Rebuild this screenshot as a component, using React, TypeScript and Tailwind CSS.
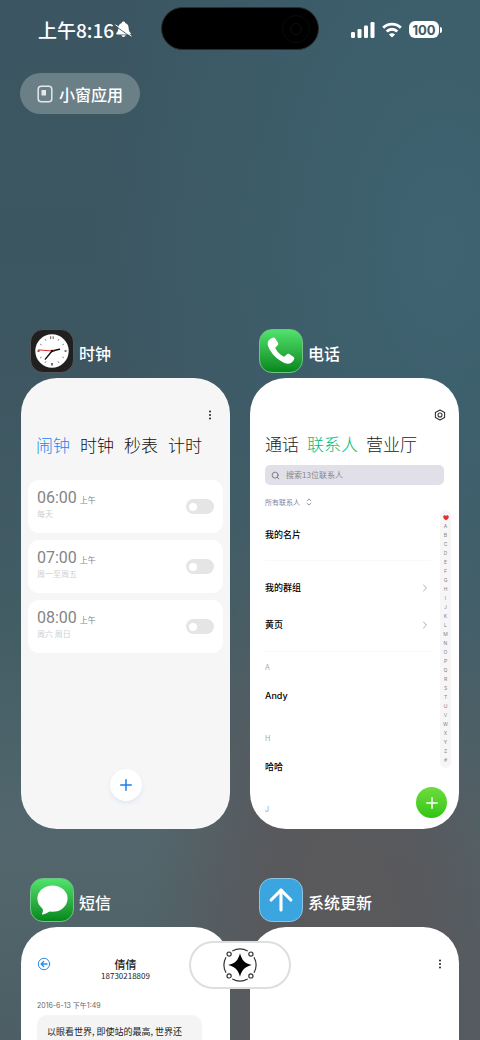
import type { ReactNode } from "react"
import { ArrowUp, ChevronRight, Plus, Search } from "lucide-react"

const ALARMS = [
  { time: "06:00", period: "上午", repeat: "每天" },
  { time: "07:00", period: "上午", repeat: "周一至周五" },
  { time: "08:00", period: "上午", repeat: "周六 周日" },
]

const CONTACTS = [
  { letter: "A", name: "Andy" },
  { letter: "H", name: "哈哈" },
  { letter: "J", name: "" },
]

const INDEX = [..."ABCDEFGHIJKLMNOPQRSTUVWXYZ#"]

function BellOffIcon() {
  return (
    <svg viewBox="0 0 17 17" className="h-[17px] w-[17px]" aria-label="静音">
      <path
        d="M8.500.6c1 0 1.600.6 1.700 1.300 2.200.8 3.300 2.500 3.400 4.600.1 2.700.6 4 2 5.500.5.7.2 1.500-.7 1.500H2.100c-.9 0-1.200-.8-.7-1.500 1.400-1.500 1.900-2.800 2-5.500.1-2.100 1.200-3.800 3.400-4.600C6.900 1.200 7.500.6 8.500.6z"
        fill="#fff"
      />
      <path d="M6.500 14.300h4c-.2 1.100-1 1.700-2 1.700s-1.800-.6-2-1.700z" fill="#fff" />
      <path d="M.5 5 15.500 15.800" stroke="#3b5661" strokeWidth=".9" />
      <path d="M.8 4 16.200 15" stroke="#fff" strokeWidth="1" strokeLinecap="round" />
    </svg>
  )
}

function StatusBar() {
  return (
    <header className="mt-[7px] grid h-[43px] shrink-0 grid-cols-[1fr_158px_1fr] items-center">
      <div className="flex items-center gap-px pt-[2px] pl-[38px] text-white">
        <span className="text-[19px] leading-6 font-medium">上午8:16</span>
        <BellOffIcon />
      </div>

      {/* Camera cutout */}
      <div className="flex h-[43px] items-center justify-end rounded-full border border-[#2c2c2e] bg-black pr-2">
        <div className="flex h-7 w-7 items-center justify-center rounded-full border border-[#0a0a0a]">
          <div className="h-3 w-3 rounded-full border border-[#0e0e0e]" />
        </div>
      </div>

      <div className="flex items-center justify-end gap-[7px] pt-[2px] pr-[38px] text-white">
        <svg viewBox="0 0 24 16" className="h-4 w-6" fill="currentColor" aria-label="信号">
          <rect x="0" y="10" width="4" height="6" rx="1.200" />
          <rect x="6.500" y="7" width="4" height="9" rx="1.200" />
          <rect x="13" y="3.500" width="4" height="12.500" rx="1.200" />
          <rect x="19.500" y="0" width="4" height="16" rx="1.200" />
        </svg>
        <svg viewBox="0 0 20 16" className="h-4 w-5" fill="none" stroke="currentColor" strokeWidth="2.900" aria-label="无线网络">
          <path d="M1.200 5.700a12.500 12.500 0 0 1 17.600 0" />
          <path d="M4.700 9.500a7.500 7.500 0 0 1 10.600 0" />
          <path d="M10 15.600 6.900 12.500a4.400 4.400 0 0 1 6.200 0z" fill="currentColor" stroke="none" />
        </svg>
        <div className="flex items-center gap-px">
          <span className="flex h-[17px] w-[30px] items-center justify-center rounded-[6px] bg-white font-['Inter',sans-serif] text-[13px] leading-4 font-bold text-[#3c5964]">
            100
          </span>
          <span className="h-[6px] w-[2px] rounded-r-full bg-white" />
        </div>
      </div>
    </header>
  )
}

function ClockIcon() {
  return (
    <svg viewBox="0 0 44 44" className="h-full w-full">
      <circle cx="22" cy="22" r="17.500" fill="#fff" />
      <g stroke="#777" strokeWidth=".8">
        {[30, 60, 120, 150, 210, 240, 300, 330].map((deg) => (
          <path key={deg} d="M22 7.500v2" transform={`rotate(${deg} 22 22)`} />
        ))}
      </g>
      <g stroke="#444" strokeWidth="1.600">
        <path d="M20.600 6.500v3M23.200 6.500v3" strokeWidth=".9" />
        <path d="M22 34.500v2.800M6.800 22h2.200M35.200 22h2" />
      </g>
      <path d="M22 22l7.800-1.800" stroke="#111" strokeWidth="1.700" strokeLinecap="round" />
      <path d="M22 22l-7 8.500" stroke="#111" strokeWidth="1.500" strokeLinecap="round" />
      <path d="M25 22.200 7.500 20.800" stroke="#e02020" strokeWidth="1" />
      <circle cx="22" cy="22" r="1.300" fill="#111" />
    </svg>
  )
}

function HandsetIcon() {
  return (
    <svg viewBox="0 0 44 44" className="h-full w-full" fill="#fff">
      <path d="M13.200 8.200c1.200-.5 2.200-.1 2.900.9l2.600 4c.8 1.300.5 2.400-.6 3.400l-1.400 1.300c-.7.6-.7 1.300-.2 2.200 1.900 3.300 4.300 5.700 7.500 7.500.9.5 1.600.5 2.200-.2l1.400-1.500c1-1 2.100-1.300 3.400-.5l3.900 2.600c1.100.8 1.300 1.800.7 3-1.300 2.600-3.500 4.500-6.600 4.400-3.900-.2-9.300-3.500-13.500-7.700C11.300 23.200 8.200 18 8 14.200c-.1-2.600 2.300-5 5.200-6z" />
    </svg>
  )
}

function MessageIcon() {
  return (
    <svg viewBox="0 0 44 44" className="h-full w-full" fill="#fff">
      <ellipse cx="22.500" cy="20.500" rx="15.800" ry="13.800" />
      <path d="M10.500 28.500c2.300 2.300 2.700 5.600 1 7.900-.3.500 0 .9.600.8 3.200-.6 5.900-1.900 8.400-4.200z" />
    </svg>
  )
}

function MoreButton() {
  return (
    <button className="flex h-[14px] w-2 items-center justify-center" aria-label="更多">
      <svg viewBox="0 0 4 10" className="h-[10px] w-1" fill="#222">
        <circle cx="2" cy="1.600" r="1" />
        <circle cx="2" cy="5" r="1" />
        <circle cx="2" cy="8.400" r="1" />
      </svg>
    </button>
  )
}

type TaskProps = {
  title: string
  icon: ReactNode
  iconClass: string
  cardClass: string
  children: ReactNode
}

function Task({ title, icon, iconClass, cardClass, children }: TaskProps) {
  return (
    <section className="flex min-w-0 flex-col gap-[5px]">
      <div className="flex items-center gap-[5px] pl-[9px]">
        <div className={`flex h-11 w-11 items-center justify-center overflow-hidden rounded-[13px] border ${iconClass}`}>
          {icon}
        </div>
        <h2 className="pt-[3px] text-[16px] leading-6 font-medium text-white">{title}</h2>
      </div>
      <div className={`relative flex h-[451px] flex-col overflow-hidden rounded-[36px] pt-[30px] ${cardClass}`}>
        {children}
      </div>
    </section>
  )
}

function ClockTask() {
  return (
    <Task title="时钟" icon={<ClockIcon />} iconClass="border-[#555] bg-[#202020]" cardClass="bg-[#f6f6f6]">
      <div className="flex justify-end pr-4">
        <MoreButton />
      </div>
      <nav className="mt-[11px] flex gap-[10px] pl-[15px] text-[17px] leading-6 font-light text-[#111]">
        <button className="text-[#1a86f0]">闹钟</button>
        <button>时钟</button>
        <button>秒表</button>
        <button>计时</button>
      </nav>
      <ul className="mx-[7px] mt-[23px] flex flex-col gap-[7px]">
        {ALARMS.map((alarm) => (
          <li key={alarm.time}>
            <label className="flex h-[53px] items-center justify-between rounded-[11px] bg-white pr-[9px] pl-[9px]">
              <span className="flex flex-col pb-[6px]">
                <span className="flex items-baseline gap-[3px] text-[#858585]">
                  <span className="font-['Roboto',sans-serif] text-[16px] leading-[18px]">{alarm.time}</span>
                  <span className="text-[8px] leading-[18px]">{alarm.period}</span>
                </span>
                <span className="text-[8px] leading-[10px] text-[#cfcfcf]">{alarm.repeat}</span>
              </span>
              <input
                type="checkbox"
                role="switch"
                className="flex h-[15px] w-7 appearance-none items-center rounded-full bg-[#e5e5e5] pl-[3px] before:h-2 before:w-2 before:rounded-full before:bg-white checked:bg-[#2b8cec]"
              />
            </label>
          </li>
        ))}
      </ul>
      <button
        className="mx-auto mt-auto mb-7 flex h-8 w-8 items-center justify-center rounded-full bg-white text-[#1a7fe8] shadow-[0_2px_4px_rgba(60,120,220,0.12)]"
        aria-label="添加闹钟"
      >
        <Plus className="h-[18px] w-[18px]" strokeWidth={2} />
      </button>
    </Task>
  )
}

function PhoneTask() {
  return (
    <Task
      title="电话"
      icon={<HandsetIcon />}
      iconClass="border-[#6fc583] bg-linear-to-b from-[#50e36c] to-[#04871c]"
      cardClass="bg-white"
    >
      <div className="flex justify-end pr-[13px]">
        <button className="h-[14px] w-3" aria-label="设置">
          <svg viewBox="0 0 12 14" className="h-[14px] w-3" fill="none" stroke="#333" strokeWidth="1.100" strokeLinejoin="round">
            <path d="M6 2 10.600 4.500v5L6 12 1.400 9.500v-5z" />
            <circle cx="6" cy="7" r="2" />
          </svg>
        </button>
      </div>
      <nav className="mt-[10px] flex gap-2 pl-[15px] text-[17px] leading-6 font-light text-[#222]">
        <button>通话</button>
        <button className="text-[#00bd76]">联系人</button>
        <button>营业厅</button>
      </nav>
      <label className="mx-[15px] mt-[9px] flex h-5 shrink-0 items-center gap-[6px] rounded-[5px] bg-[#e1e0e8] px-[6px] text-[#77777f]">
        <Search className="h-[9px] w-[9px] shrink-0" strokeWidth={2.5} />
        <input
          type="search"
          aria-label="搜索联系人"
          placeholder="搜索13位联系人"
          className="min-w-0 flex-1 bg-transparent text-[8px] leading-3 outline-none placeholder:text-[#85858c]"
        />
      </label>
      <button className="mx-[15px] mt-[9px] flex h-4 shrink-0 items-center gap-[6px] text-[7px] text-[#8085a3]">
        所有联系人
        <svg viewBox="0 0 6 8" className="h-2 w-[6px]" fill="none" stroke="currentColor" strokeWidth="0.900">
          <path d="M.8 3 3 .9 5.200 3M.8 5 3 7.100 5.200 5" />
        </svg>
      </button>
      <div className="flex min-h-0 flex-1 pr-2 pl-[15px]">
        <div className="min-w-0 flex-1 pr-[9px] font-['Inter','Noto_Sans_CJK_SC',sans-serif] text-[9px] font-medium text-black">
          <button className="flex h-[51px] w-full items-center border-b border-[#f9f9f9]">我的名片</button>
          <div className="border-b border-[#f9f9f9] py-2">
            {["我的群组", "黄页"].map((item) => (
              <button key={item} className="flex h-[37px] w-full items-center justify-between">
                {item}
                <ChevronRight className="h-3 w-3 text-[#aaa]" strokeWidth={2} />
              </button>
            ))}
          </div>
          {CONTACTS.map((contact) => (
            <div key={contact.letter} className="h-[71px]">
              <h3 className="text-[7px] leading-[31px] font-normal text-[#a0a3b0]">{contact.letter}</h3>
              {contact.name && <a href="#contact" className="block leading-[26px]">{contact.name}</a>}
            </div>
          ))}
        </div>
        <nav className="flex w-[11px] flex-col items-center self-start rounded-full bg-[#f6f6f6] py-[3px] font-['Inter',sans-serif] text-[5px] text-[#858585]">
          <a href="#fav" className="h-[9px] leading-[9px]" aria-label="收藏">
            <svg viewBox="0 0 6 9" className="h-[9px] w-[6px]" fill="#e5302f">
              <path d="M3 7.300C1 5.900.2 5 .2 3.700.2 2.100 2.200 1.600 3 2.900c.8-1.300 2.800-.8 2.800.8C5.800 5 5 5.900 3 7.300z" />
            </svg>
          </a>
          {INDEX.map((letter) => (
            <a key={letter} href={`#${letter}`} className="h-[9px] leading-[9px]">
              {letter}
            </a>
          ))}
        </nav>
      </div>
      <button
        className="absolute right-[12px] bottom-[11px] flex h-[31px] w-[31px] items-center justify-center rounded-full bg-linear-to-b from-[#6ddc3e] to-[#2fc510] text-white"
        aria-label="新建联系人"
      >
        <Plus className="h-[18px] w-[18px]" strokeWidth={2} />
      </button>
    </Task>
  )
}

function MessageTask() {
  return (
    <Task
      title="短信"
      icon={<MessageIcon />}
      iconClass="border-[#6fc583] bg-linear-to-b from-[#50e36c] to-[#04871c]"
      cardClass="bg-white"
    >
      <div className="grid grid-cols-[14px_1fr_14px] px-4">
        <button className="h-[14px] text-[#2b8cec]" aria-label="返回">
          <svg viewBox="0 0 14 14" className="h-[14px] w-[14px]" fill="none" stroke="currentColor" strokeLinecap="round" strokeLinejoin="round">
            <circle cx="7" cy="7" r="5.700" />
            <path d="M10 7H4.300M6.600 4.500 4.100 7l2.500 2.500" strokeWidth="1.300" />
          </svg>
        </button>
        <div className="text-center text-[#222]">
          <h3 className="text-[11px] leading-[14px] font-medium">倩倩</h3>
          <p className="text-[8px] leading-[10px]">18730218809</p>
        </div>
      </div>
      <p className="mt-[19px] pl-4 font-['Inter','Noto_Sans_CJK_SC',sans-serif] text-[7px] leading-3 text-[#666]">
        2016-6-13 下午1:49
      </p>
      <p className="mt-[3px] mr-7 ml-4 rounded-[10px] bg-[#f4f4f4] px-[10px] py-2 text-[9px] leading-[18px] text-[#222]">
        以眼看世界, 即使站的最高, 世界还
      </p>
    </Task>
  )
}

function UpdateTask() {
  return (
    <Task
      title="系统更新"
      icon={<ArrowUp className="h-[34px] w-[34px] text-white" strokeWidth={2.2} />}
      iconClass="border-[#8fc3e0] bg-[#3ba5e0]"
      cardClass="bg-white"
    >
      <div className="flex justify-end pr-[15px]">
        <MoreButton />
      </div>
    </Task>
  )
}

export default function App() {
  return (
    <main className="relative flex h-screen flex-col overflow-hidden bg-[#425c66] bg-[radial-gradient(ellipse_at_92%_24%,#3e6371_0%,transparent_55%),radial-gradient(ellipse_at_72%_94%,#5b595c_0%,#58595d_18%,transparent_42%),linear-gradient(180deg,#3b5662_0%,#3d5661_35%,#435d65_60%,#52676d_80%,#4d5f65_100%)] font-['Noto_Sans_CJK_SC',sans-serif]">
      <StatusBar />

      <button className="mt-[23px] ml-[20px] flex h-[41px] w-[120px] shrink-0 items-center justify-center gap-[6px] rounded-full bg-[#6b7f87] text-[16px] leading-6 font-medium text-white">
        <svg viewBox="0 0 16 18" className="h-[18px] w-4" fill="none" stroke="#e4e8ea" strokeWidth="1.500">
          <rect x="1.200" y="1.200" width="13.600" height="15.600" rx="3" />
          <rect x="4.500" y="5" width="4.500" height="5.500" fill="#e4e8ea" stroke="none" />
        </svg>
        小窗应用
      </button>

      <div className="mt-[215px] grid shrink-0 grid-cols-2 gap-x-5 gap-y-[49px] px-[21px]">
        <ClockTask />
        <PhoneTask />
        <MessageTask />
        <UpdateTask />
      </div>

      {/* Clear-all button floating over the cards */}
      <button
        className="absolute bottom-[51px] left-1/2 flex h-12 w-[102px] -translate-x-1/2 items-center justify-center rounded-full border-2 border-[#dedede] bg-white"
        aria-label="清除全部"
      >
        <svg viewBox="0 0 34 34" className="h-[34px] w-[34px]" fill="none" stroke="#333" strokeWidth="1.200">
          {[0, 90, 180, 270].map((deg) => (
            <g key={deg} transform={`rotate(${deg} 17 17)`}>
              <path d="M9.300 3a16 16 0 0 1 15.400 0" />
              <circle cx="27.900" cy="6.100" r="2.100" />
            </g>
          ))}
          <path d="M17 5.200c1.900 7.200 4.600 9.900 11.800 11.800C21.600 18.900 18.900 21.600 17 28.800 15.100 21.600 12.400 18.900 5.200 17 12.400 15.100 15.100 12.400 17 5.200z" fill="#000" stroke="none" />
        </svg>
      </button>
    </main>
  )
}
